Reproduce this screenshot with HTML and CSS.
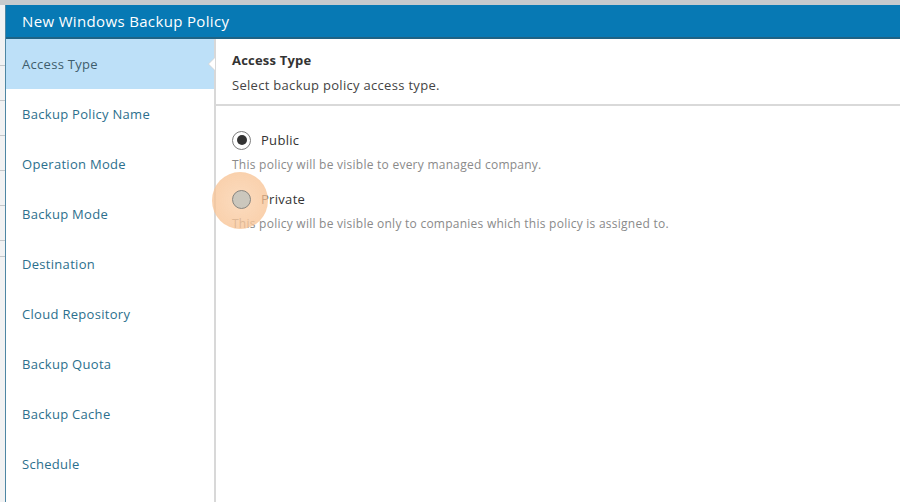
FILE: index.html
```html
<!DOCTYPE html>
<html lang="en">
<head>
<meta charset="utf-8">
<title>New Windows Backup Policy</title>
<link rel="stylesheet" href="styles.css">
</head>
<body>
<div class="page">
  <div class="topband"></div>
  <div class="main">
    <div class="edge">
      <div class="edge-row"></div><div class="edge-row"></div><div class="edge-row"></div>
      <div class="edge-row"></div><div class="edge-row"></div><div class="edge-row"></div>
      <div class="edge-row short"></div>
    </div>
    <div class="dialog">
      <div class="dialog-title">New Windows Backup Policy</div>
      <div class="dialog-body">
        <nav class="steps">
          <div class="step active">Access Type</div>
          <div class="step">Backup Policy Name</div>
          <div class="step">Operation Mode</div>
          <div class="step">Backup Mode</div>
          <div class="step">Destination</div>
          <div class="step">Cloud Repository</div>
          <div class="step">Backup Quota</div>
          <div class="step">Backup Cache</div>
          <div class="step">Schedule</div>
        </nav>
        <section class="pane">
          <span class="notch"></span>
          <header class="pane-head">
            <div class="pane-title">Access Type</div>
            <div class="pane-sub">Select backup policy access type.</div>
          </header>
          <div class="options">
            <label class="option">
              <span class="radio-wrap"><span class="radio checked"></span></span>
              <span class="option-label">Public</span>
            </label>
            <div class="option-desc">This policy will be visible to every managed company.</div>
            <label class="option second">
              <span class="radio-wrap"><span class="click-mark"></span><span class="radio pressed"></span></span>
              <span class="option-label">Private</span>
            </label>
            <div class="option-desc">This policy will be visible only to companies which this policy is assigned to.</div>
          </div>
        </section>
      </div>
    </div>
  </div>
</div>
</body>
</html>
```
FILE: styles.css
```css
html, body {
  margin: 0;
  padding: 0;
  height: 100%;
}

body {
  font-family: "Open Sans", "Noto Sans", sans-serif;
  background: #eef0f2;
  overflow: hidden;
}

.page {
  display: flex;
  flex-direction: column;
  height: 502px;
}

.topband {
  height: 5px;
  background: #c6cacd;
  flex: none;
}

.main {
  flex: 1;
  display: flex;
  min-height: 0;
}

/* strip of the page behind the dialog */
.edge {
  width: 5px;
  flex: none;
  background: #f1f2f3;
  display: flex;
  flex-direction: column;
  padding-top: 26px;
}

.edge-row {
  height: 34px;
  border-bottom: 1px solid #c3c7ca;
  flex: none;
}

.edge-row.short {
  height: 15px;
}

.dialog {
  flex: 1;
  display: flex;
  flex-direction: column;
  background: #fff;
  border-left: 1px solid #4d86a3;
  min-width: 0;
}

.dialog-title {
  flex: none;
  height: 34px;
  box-sizing: border-box;
  background: #0779b4;
  border-bottom: 2px solid #1f6385;
  color: #fff;
  font-size: 15px;
  letter-spacing: 0.35px;
  line-height: 33px;
  padding-left: 16px;
}

.dialog-body {
  flex: 1;
  display: flex;
  min-height: 0;
}

.steps {
  width: 208px;
  flex: none;
  display: flex;
  flex-direction: column;
}

.step {
  height: 50px;
  flex: none;
  display: flex;
  align-items: center;
  padding-left: 16px;
  font-size: 13px;
  letter-spacing: 0.3px;
  color: #2c6f8d;
}

.step.active {
  background: #bde0f8;
  color: #3e5d6c;
}

.pane {
  position: relative;
  flex: 1;
  border-left: 2px solid #d8d8d8;
  min-width: 0;
}

/* pointer from the active step into the pane */
.notch {
  position: absolute;
  left: -8px;
  top: 18px;
  width: 0;
  height: 0;
  border-top: 7px solid transparent;
  border-bottom: 7px solid transparent;
  border-right: 7px solid #d8d8d8;
}

.notch::after {
  content: "";
  position: absolute;
  left: 1px;
  top: -6px;
  border-top: 6px solid transparent;
  border-bottom: 6px solid transparent;
  border-right: 6px solid #fff;
}

.pane-head {
  padding: 12px 16px 10px;
  border-bottom: 2px solid #d9d9d9;
}

.pane-title {
  font-size: 13px;
  font-weight: 700;
  line-height: 18px;
  letter-spacing: 0.2px;
  color: #333;
}

.pane-sub {
  font-size: 13px;
  line-height: 18px;
  letter-spacing: 0.3px;
  color: #444;
  margin-top: 7px;
}

.options {
  padding: 24px 16px 0;
  display: flex;
  flex-direction: column;
}

.option {
  display: flex;
  align-items: center;
  height: 20px;
  gap: 10px;
}

.option.second {
  margin-top: 16px;
}

.radio-wrap {
  position: relative;
  width: 19px;
  height: 19px;
  flex: none;
}

.radio {
  position: relative;
  z-index: 1;
  box-sizing: border-box;
  width: 19px;
  height: 19px;
  border-radius: 50%;
  border: 1px solid #7d7d7d;
  background: #fff;
  display: flex;
  align-items: center;
  justify-content: center;
}

.radio.checked::after {
  content: "";
  width: 10px;
  height: 10px;
  border-radius: 50%;
  background: #333;
}

.radio.pressed {
  background: #cbc7bd;
  border-color: #878580;
}

/* click highlight around the pressed radio */
.click-mark {
  position: absolute;
  left: -20px;
  top: -18px;
  width: 56px;
  height: 57px;
  border-radius: 50%;
  background: radial-gradient(circle, rgba(250, 206, 166, 0.72) 0%, rgba(248, 196, 150, 0.78) 70%, rgba(240, 160, 92, 0.85) 96%, rgba(240, 160, 92, 0) 100%);
  filter: blur(0.5px);
  pointer-events: none;
}

.option-label {
  font-size: 13px;
  letter-spacing: 0.3px;
  color: #333;
}

.option-desc {
  font-size: 12px;
  line-height: 16px;
  letter-spacing: 0.25px;
  color: #8a8a8a;
  margin-top: 7px;
}
```
